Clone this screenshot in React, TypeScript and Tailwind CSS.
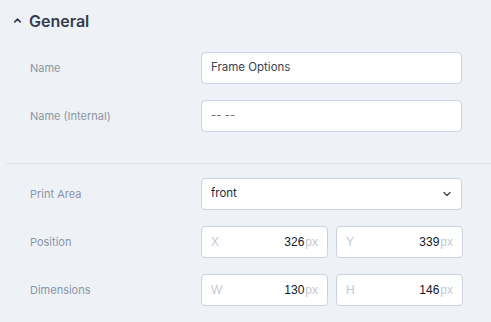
import { ChevronUp, ChevronDown } from "lucide-react";

const labelCls = "w-[171px] shrink-0 text-[11px] text-[#8a94a6]";
const boxCls = "h-8 rounded-[4px] border border-[#c9d2de] bg-white";

function UnitBox({ axis, value }: { axis: string; value: string }) {
  return (
    <div className={`${boxCls} flex w-[127px] items-center px-[9px] font-['Liberation_Sans',sans-serif] text-[12px]`}>
      <span className="text-[#c3c9d3]">{axis}</span>
      <span className="ml-auto text-[#111827]">{value}</span>
      <span className="ml-[1px] text-[#c3c9d3]">px</span>
    </div>
  );
}

export default function App() {
  return (
    <div className="h-[322px] w-[491px] overflow-hidden bg-[#eef2f6] font-['Inter',sans-serif]">
      {/* Header */}
      <div className="flex h-10 items-center pl-[12px] pt-[1px]">
        <ChevronUp size={11} strokeWidth={3.5} className="text-[#333c4e]" />
        <h2 className="ml-[6px] text-[16px] font-semibold text-[#333c4e]">General</h2>
      </div>

      {/* Names */}
      <div className="flex flex-col gap-4 pl-[30px] pt-3">
        <div className="flex items-center">
          <span className={labelCls}>Name</span>
          <div className={`${boxCls} flex w-[261px] items-center px-[9px] text-[11.5px] text-[#3a4253]`}>
            Frame Options
          </div>
        </div>
        <div className="flex items-center">
          <span className={labelCls}>Name (Internal)</span>
          <div className={`${boxCls} flex w-[261px] items-center px-[9px] text-[11.5px] text-[#6b7385]`}>
            -- --
          </div>
        </div>
      </div>

      <div className="ml-[6px] mt-[31px] border-t border-[#dde3ea]" />

      {/* Placement */}
      <div className="flex flex-col gap-4 pl-[30px] pt-[14px]">
        <div className="flex items-center">
          <span className={labelCls}>Print Area</span>
          <div className={`${boxCls} flex w-[261px] items-center px-[9px] text-[11.5px] text-[#252d3c]`}>
            front
            <ChevronDown size={12} strokeWidth={2.5} className="ml-auto -mr-[1px] text-[#3a4253]" />
          </div>
        </div>
        <div className="flex items-center">
          <span className={labelCls}>Position</span>
          <div className="flex gap-2">
            <UnitBox axis="X" value="326" />
            <UnitBox axis="Y" value="339" />
          </div>
        </div>
        <div className="flex items-center">
          <span className={labelCls}>Dimensions</span>
          <div className="flex gap-2">
            <UnitBox axis="W" value="130" />
            <UnitBox axis="H" value="146" />
          </div>
        </div>
      </div>
    </div>
  );
}
